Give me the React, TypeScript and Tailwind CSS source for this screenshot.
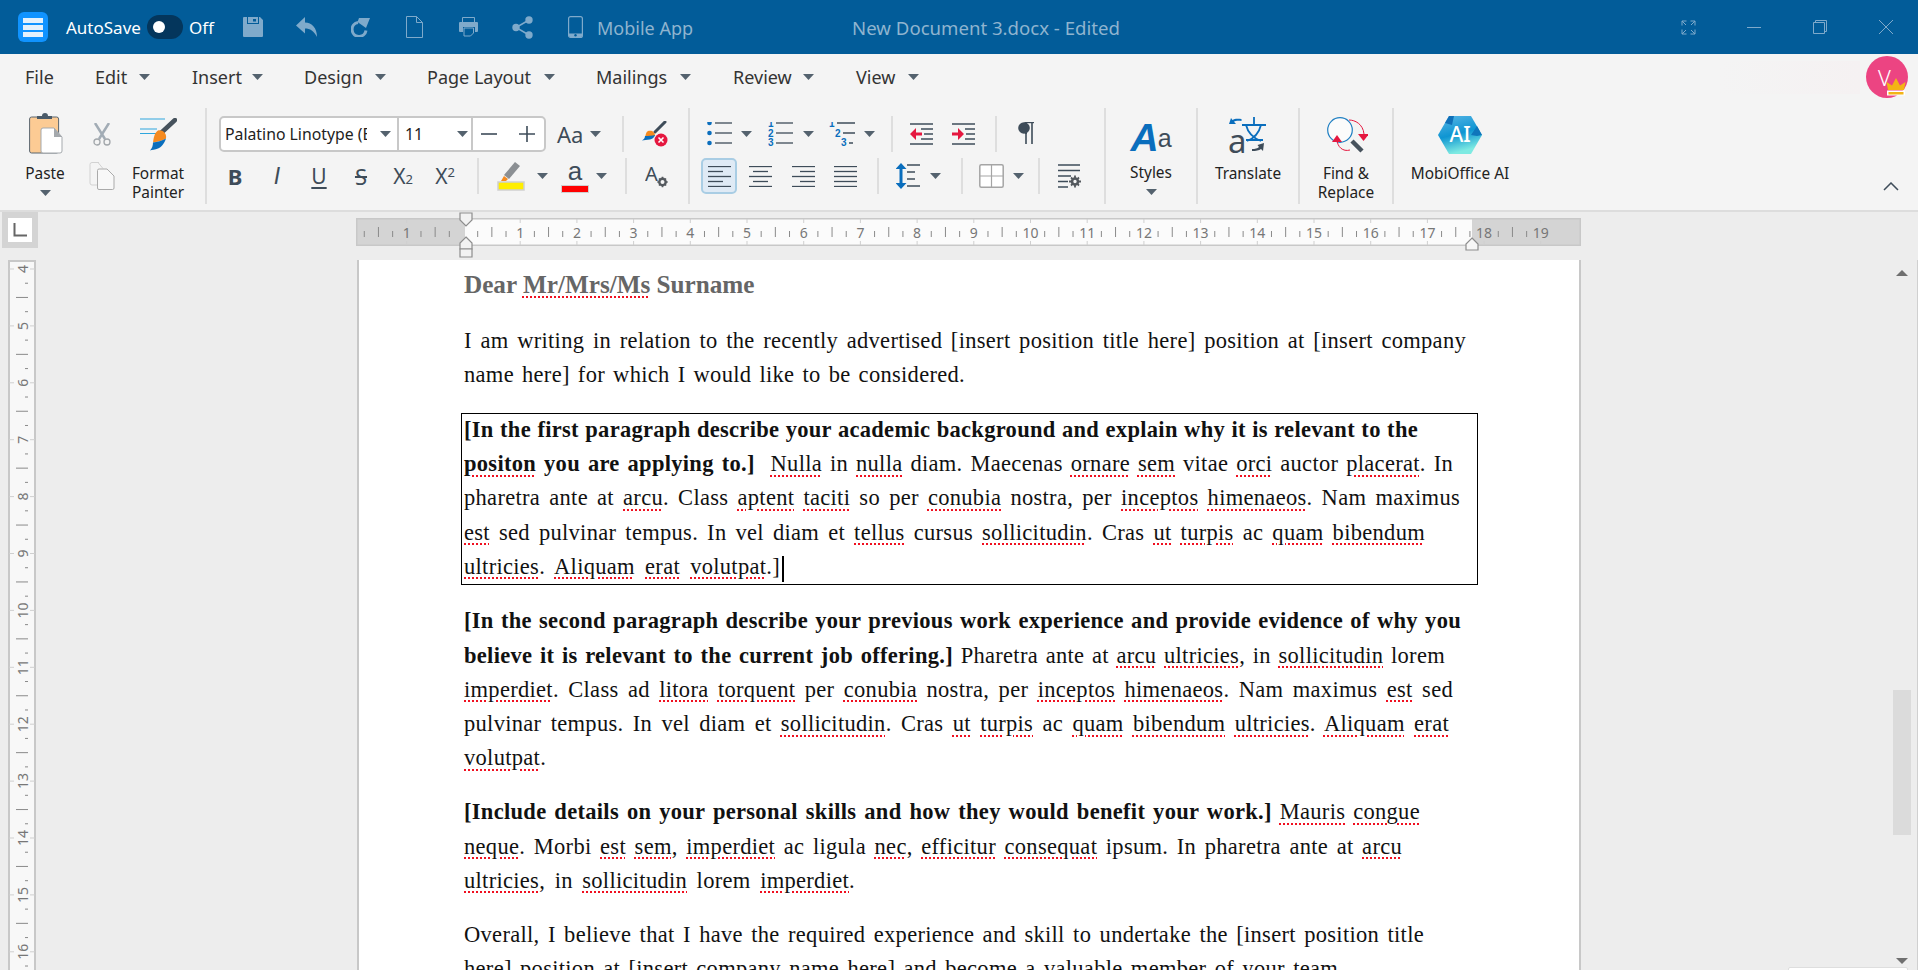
import React from "react";

const SLATE = "#3e4c59";
const BLUE = "#0a6ebd";
const MUTE = "#7faacb";

function Caret({ className = "" }: { className?: string }) {
  return (
    <svg width="11" height="6" viewBox="0 0 11 6" className={"shrink-0 " + className}>
      <path d="M0 0h11L5.5 6z" fill="#54626e" />
    </svg>
  );
}

function Sep({ className = "" }: { className?: string }) {
  return <div className={"w-[2px] h-[36px] bg-[#dedede] shrink-0 " + className} />;
}

function BigSep() {
  return <div className="w-[2px] h-[96px] mt-[8px] bg-[#dedede] shrink-0" />;
}

function TitleBar() {
  return (
    <div className="h-[54px] shrink-0 bg-[#025c99] flex items-center text-[17px] leading-[20px] whitespace-nowrap">
      <div className="ml-[18px] w-[30px] h-[30px] rounded-[6px] bg-[#1093ff] flex flex-col items-center justify-center gap-[2px]">
        <div className="w-[20px] h-[5px] bg-[#e4f1fc]" />
        <div className="w-[20px] h-[5px] bg-[#e4f1fc]" />
        <div className="w-[20px] h-[5px] bg-[#e4f1fc]" />
      </div>
      <div className="ml-[18px] w-[81px] text-white pt-[1px]">AutoSave</div>
      <div className="w-[36px] h-[24px] rounded-full bg-[#04365c] flex items-center pl-[6px]">
        <div className="w-[12px] h-[12px] rounded-full bg-white" />
      </div>
      <div className="ml-[6px] w-[28px] text-white pt-[1px]">Off</div>
      <svg width="20" height="20" viewBox="0 0 20 20" className="ml-[26px] shrink-0">
        <path d="M0 1a1 1 0 011-1h3v7h12V0h1l3 3v16a1 1 0 01-1 1H1a1 1 0 01-1-1z" fill={MUTE} />
        <path d="M5 0h10v6H5z" fill={MUTE} />
        <path d="M10 2h3v2.500h-3z" fill="#025c99" />
        <path d="M4 6.500h12" stroke="#025c99" strokeWidth="1" />
      </svg>
      <svg width="21" height="20" viewBox="0 0 21 20" className="ml-[33px] shrink-0">
        <path d="M9 0L0 8.500 9 16.500V11.500C14 11.500 18 14 21 20 21 11 16 5.500 9 5.500z" fill={MUTE} />
      </svg>
      <svg width="19" height="20" viewBox="0 0 19 20" className="ml-[34px] shrink-0">
        <path d="M7 5.500A7 7 0 1 0 15 13.500" fill="none" stroke={MUTE} strokeWidth="3" />
        <path d="M8 1H19L15 11 6.500 5z" fill={MUTE} />
      </svg>
      <svg width="17" height="22" viewBox="0 0 17 22" className="ml-[36px] shrink-0">
        <path d="M.5.5h10l6 6v15H.5zM10.500.5v6h6" fill="none" stroke={MUTE} />
      </svg>
      <svg width="19" height="20" viewBox="0 0 19 20" className="ml-[36px] shrink-0">
        <path d="M3.500.5h12v5h-12z" fill="none" stroke={MUTE} />
        <path d="M1 5h17a1 1 0 011 1v8a1 1 0 01-1 1h-2V10H4v5H1a1 1 0 01-1-1V6a1 1 0 011-1z" fill={MUTE} />
        <path d="M5 11h9.500v5l-3 3H5z" fill="none" stroke={MUTE} />
      </svg>
      <svg width="21" height="23" viewBox="0 0 21 23" className="ml-[34px] shrink-0">
        <g fill={MUTE}>
          <circle cx="17" cy="4" r="3.700" />
          <circle cx="4" cy="11.500" r="3.700" />
          <circle cx="17" cy="19" r="3.700" />
        </g>
        <path d="M17 4L4 11.500 17 19" fill="none" stroke={MUTE} strokeWidth="1.500" />
      </svg>
      <svg width="15" height="22" viewBox="0 0 15 22" className="ml-[35px] shrink-0">
        <rect x=".6" y=".6" width="13.800" height="20.800" rx="2" fill="none" stroke={MUTE} strokeWidth="1.200" />
        <path d="M1 17.500h13v2a2 2 0 01-2 2H3a2 2 0 01-2-2z" fill={MUTE} />
        <circle cx="7.500" cy="19.300" r="1.200" fill="#025c99" />
      </svg>
      <div className="ml-[14px] w-[255px] text-[#8fb4cf] text-[18px] pt-[1px]">Mobile App</div>
      <div className="w-[268px] text-center text-[#8fb4cf] text-[18.600px] pt-[1px]">New Document 3.docx - Edited</div>
      <svg width="15" height="15" viewBox="0 0 15 15" className="ml-[561px] shrink-0">
        <path d="M5.500 1H1v4.500M1 1l4 4M9.500 1H14v4.500M14 1l-4 4M5.500 14H1V9.500M1 14l4-4M9.500 14H14V9.500M14 14l-4-4" fill="none" stroke={MUTE} />
      </svg>
      <svg width="14" height="14" viewBox="0 0 14 14" className="ml-[51px] shrink-0">
        <path d="M0 7.500h14" stroke={MUTE} />
      </svg>
      <svg width="14" height="14" viewBox="0 0 14 14" className="ml-[52px] shrink-0">
        <path d="M2.500 2.500V.5h11v11h-2M.5 2.500h11v11H.5z" fill="none" stroke={MUTE} />
      </svg>
      <svg width="14" height="14" viewBox="0 0 14 14" className="ml-[52px] shrink-0">
        <path d="M0 0l14 14M14 0L0 14" stroke={MUTE} />
      </svg>
    </div>
  );
}

function MenuBar() {
  return (
    <div className="h-[46px] flex items-center text-[18px] text-[#333] whitespace-nowrap">
      <div className="ml-[25px] w-[28px]">File</div>
      <div className="ml-[42px] w-[32px]">Edit</div>
      <Caret className="ml-[12px]" />
      <div className="ml-[42px] w-[49px]">Insert</div>
      <Caret className="ml-[11px]" />
      <div className="ml-[41px] w-[59px]">Design</div>
      <Caret className="ml-[12px]" />
      <div className="ml-[41px] w-[105px]">Page Layout</div>
      <Caret className="ml-[12px]" />
      <div className="ml-[41px] w-[72px]">Mailings</div>
      <Caret className="ml-[12px]" />
      <div className="ml-[42px] w-[59px]">Review</div>
      <Caret className="ml-[11px]" />
      <div className="ml-[42px] w-[41px]">View</div>
      <Caret className="ml-[11px]" />
      <div className="ml-auto w-[140px] h-[33px] bg-linear-to-r from-[#f4f4f4] to-[#f5f1f2]" />
      <div className="ml-[6px] mr-[10px] relative w-[42px] h-[42px] rounded-full bg-[#ec4482] text-white text-[22px] leading-[42px] pl-[12px] font-light">
        V
        <svg width="22" height="19" viewBox="0 0 22 19" className="absolute left-[19px] top-[21px]">
          <path d="M2 16h18" stroke="#fff" strokeWidth="5" />
          <path d="M3 13L1.500 5 7 8.500 11 1l4 7.500L20.500 5 19 13zM3.500 15h15v2.500h-15z" fill="#f3b415" />
        </svg>
      </div>
    </div>
  );
}

function PasteIcon() {
  return (
    <svg width="34" height="42" viewBox="0 0 34 42">
      <rect x=".6" y="4" width="29" height="36" rx="2" fill="#fccb94" stroke="#59656f" />
      <path d="M8 5V3h5a3 3 0 016 0h4v3H8z" fill="#4a5a68" />
      <path d="M14 15h11l8 9v14a2 2 0 01-2 2H14a2 2 0 01-2-2V17a2 2 0 012-2z" fill="#fff" stroke="#a5a9ad" />
      <path d="M25 15l8 9h-8z" fill="#a5a9ad" />
    </svg>
  );
}

function ClipboardSection() {
  return (
    <div className="w-[205px] shrink-0 flex text-[#222]">
      <div className="w-[90px] flex flex-col items-center pt-[13px]">
        <div className="h-[42px] ml-[2px]"><PasteIcon /></div>
        <div className="mt-[9px]">Paste</div>
        <Caret className="mt-[7px]" />
      </div>
      <div className="w-[24px] flex flex-col items-center pt-[23px]">
        <svg width="18" height="23" viewBox="0 0 18 23">
          <path d="M2 0l10 16M16 0L6 16" stroke="#a2acb5" strokeWidth="2.500" />
          <circle cx="4" cy="19" r="3" fill="none" stroke="#a2a7ab" strokeWidth="1.300" />
          <circle cx="14" cy="19" r="3" fill="none" stroke="#a2a7ab" strokeWidth="1.300" />
        </svg>
        <svg width="26" height="28" viewBox="0 0 26 28" className="mt-[16px] shrink-0">
          <path d="M10 .5H3a2 2 0 00-2 2V21a2 2 0 002 2h5" fill="none" stroke="#d2d2d2" />
          <path d="M3 .5h6l5 6" fill="none" stroke="#d2d2d2" />
          <path d="M10 7h8l7 7v12a1.500 1.500 0 01-1.500 1.500H10A1.500 1.500 0 018.500 26V8.500A1.500 1.500 0 0110 7z" fill="#f8f8f8" stroke="#aaa" />
        </svg>
      </div>
      <div className="w-[88px] flex flex-col items-center pt-[18px]">
        <svg width="38" height="35" viewBox="0 0 38 35" className="shrink-0">
          <path d="M1 1h25M1 11h17M1 15.500h17" stroke="#2ea6dd" strokeWidth="1.200" />
          <path d="M36 2L22 15" stroke="#46525c" strokeWidth="4.500" strokeLinecap="round" />
          <path d="M19 12.500c4-1 9 2.500 8 8-2 1.500-7 3-13 4 .5-4 1.500-10 5-12z" fill="#f58a1f" />
          <path d="M14 24.500c4-.5 9-1.800 13-4-1.500 5-5 9-8 10-3 1-6 1.500-8 2 2-2 3-5 3-8z" fill="#0a6ebd" />
        </svg>
        <div className="mt-[11px] leading-[19px] text-center">Format<br />Painter</div>
      </div>
    </div>
  );
}

function FontSection() {
  const cell = "w-[42px] h-[36px] flex items-center justify-center shrink-0";
  return (
    <div className="w-[481px] shrink-0 pt-[16px]">
      <div className="h-[36px] flex items-center">
        <div className="ml-[12px] w-[327px] h-[36px] rounded-[5px] border-2 border-[#c8c8c8] bg-white flex items-center text-[#222] text-[15.800px] shrink-0">
          <div className="w-[176px] flex items-center pl-[4px]">
            <div className="w-[142px] overflow-hidden whitespace-nowrap">Palatino Linotype (Body)</div>
            <Caret className="ml-[13px]" />
          </div>
          <div className="w-[2px] h-full bg-[#c8c8c8]" />
          <div className="w-[72px] flex items-center pl-[6px]">
            <div className="w-[52px]">11</div>
            <Caret />
          </div>
          <div className="w-[2px] h-full bg-[#c8c8c8]" />
          <svg width="16" height="16" viewBox="0 0 16 16" className="ml-[8px] shrink-0">
            <path d="M0 8h16" stroke={SLATE} strokeWidth="1.600" />
          </svg>
          <svg width="16" height="16" viewBox="0 0 16 16" className="ml-[22px] shrink-0">
            <path d="M0 8h16M8 0v16" stroke={SLATE} strokeWidth="1.600" />
          </svg>
        </div>
        <div className="ml-[11px] w-[28px] text-[22px] leading-[36px] text-[#3e4c59]">Aa</div>
        <Caret className="ml-[5px]" />
        <Sep className="ml-[21px]" />
        <svg width="28" height="26" viewBox="0 0 28 26" className="ml-[17px] shrink-0">
          <path d="M24 1L14 11" stroke={SLATE} strokeWidth="3" strokeLinecap="round" />
          <path d="M7 10c4-1 7 1 7 5-3 1-7 2-10 2 .5-3 1-6 3-7z" fill="#f58a1f" />
          <path d="M4 15c3 0 7-.2 10-1-1 3-3 4-5 4.500-3 .5-6 .7-8 1 2-1 3-3 3-4.500z" fill="#0a6ebd" />
          <circle cx="20" cy="19" r="6.500" fill="#e5173f" />
          <path d="M17.500 16.500l5 5M22.500 16.500l-5 5" stroke="#fff" strokeWidth="1.600" />
        </svg>
      </div>
      <div className="mt-[6px] h-[36px] flex items-center text-[#3e4c59]">
        <div className={cell + " ml-[7px] text-[22px] font-bold"}>B</div>
        <div className={cell + " font-['Liberation_Sans',sans-serif] italic text-[23px]"}>I</div>
        <div className={cell + " text-[21px] underline underline-offset-[3px]"}>U</div>
        <div className={cell + " text-[22px] line-through"}>S</div>
        <div className={cell + " text-[21px]"}>X<span className="text-[13px] mt-[7px]">2</span></div>
        <div className={cell + " text-[21px]"}>X<span className="text-[13px] -mt-[7px]">2</span></div>
        <Sep className="ml-[11px]" />
        <svg width="28" height="30" viewBox="0 0 28 30" className="ml-[18px] shrink-0">
          <path d="M18 1l5 4-11 13-5-4z" fill="#8b8f93" />
          <path d="M7 15l4 3-2 2H4z" fill="#f58a1f" />
          <rect x="1" y="21" width="26" height="8" fill="#ffee00" stroke="#cfcfcf" strokeWidth="1.500" />
        </svg>
        <Caret className="ml-[12px]" />
        <div className="ml-[13px] w-[28px] h-[36px] flex flex-col items-center">
          <div className="text-[26px] leading-[26px] h-[27px] font-['Liberation_Sans',sans-serif]">a</div>
          <div className="w-[28px] h-[8px] bg-[#ff0000] border-[1.5px] border-[#cfcfcf]" />
        </div>
        <Caret className="ml-[7px]" />
        <Sep className="ml-[18px]" />
        <svg width="23" height="24" viewBox="0 0 23 24" className="ml-[18px] shrink-0">
          <text x="0" y="17" fontSize="20" fill={SLATE} fontFamily="Noto Sans">A</text>
          <circle cx="17.500" cy="18" r="3.200" fill="none" stroke="#54595e" strokeWidth="2.400" />
          <path d="M17.500 12.800v2M17.500 21v2.200M12.300 18h2M20.500 18h2.200M14 14.500l1.400 1.400M19.600 20l1.500 1.500M21 14.500L19.600 16M15.400 20L14 21.500" stroke="#54595e" strokeWidth="1.600" />
        </svg>
      </div>
    </div>
  );
}

function Lines({ kind }: { kind: "l" | "c" | "r" | "j" }) {
  const rows: [number, number][] =
    kind === "l" ? [[0, 23], [0, 15], [0, 23], [0, 15], [0, 23]]
    : kind === "c" ? [[0, 23], [4, 19], [0, 23], [4, 19], [0, 23]]
    : kind === "r" ? [[0, 23], [8, 23], [0, 23], [8, 23], [0, 23]]
    : [[0, 23], [0, 23], [0, 23], [0, 23], [0, 23]];
  return (
    <svg width="23" height="21" viewBox="0 0 23 21" className="shrink-0">
      {rows.map((r, i) => (
        <path key={i} d={`M${r[0]} ${0.5 + i * 5}H${r[1]}`} stroke={SLATE} strokeWidth="1.300" />
      ))}
    </svg>
  );
}

function ListIcon({ kind }: { kind: "b" | "n" | "m" }) {
  return (
    <svg width="26" height="24" viewBox="0 0 26 24" className="shrink-0">
      {kind === "b" && (
        <g>
          {[1, 11, 21].map((y) => <circle key={y} cx="2.500" cy={y} r="2.300" fill={BLUE} />)}
          {[1, 11, 21].map((y) => <path key={y} d={`M8 ${y}H25`} stroke={SLATE} strokeWidth="1.300" />)}
        </g>
      )}
      {kind === "n" && (
        <g fontSize="10" fontWeight="700" fill={BLUE} fontFamily="Liberation Sans">
          <text x="0" y="5">1</text><text x="0" y="15">2</text><text x="0" y="24">3</text>
          {[1, 11, 21].map((y) => <path key={y} d={`M8 ${y}H25`} stroke={SLATE} strokeWidth="1.300" />)}
        </g>
      )}
      {kind === "m" && (
        <g fontSize="10" fontWeight="700" fill={BLUE} fontFamily="Liberation Sans">
          <text x="0" y="5">1</text><text x="6" y="15">2</text><text x="12" y="24">3</text>
          <path d="M8 1H26M14 11H26M20 21H24" stroke={SLATE} strokeWidth="1.300" />
        </g>
      )}
    </svg>
  );
}

function ParagraphSection() {
  return (
    <div className="w-[414px] shrink-0 pt-[16px]">
      <div className="h-[36px] flex items-center">
        <div className="ml-[17px]"><ListIcon kind="b" /></div>
        <Caret className="ml-[8px]" />
        <div className="ml-[16px]"><ListIcon kind="n" /></div>
        <Caret className="ml-[9px]" />
        <div className="ml-[15px]"><ListIcon kind="m" /></div>
        <Caret className="ml-[9px]" />
        <Sep className="ml-[16px]" />
        <svg width="23" height="22" viewBox="0 0 23 22" className="ml-[17px] shrink-0">
          <path d="M0 1h23M0 21h23M11 6h12M14 11h9M11 16h12" stroke={SLATE} strokeWidth="1.300" />
          <path d="M0 11l6-6v4.500h6v3H6V17z" fill="#e5173f" />
        </svg>
        <svg width="23" height="22" viewBox="0 0 23 22" className="ml-[19px] shrink-0">
          <path d="M0 1h23M0 21h23M13 6h10M14 11h9M13 16h10" stroke={SLATE} strokeWidth="1.300" />
          <path d="M12 11L6 5v4.500H0v3h6V17z" fill="#e5173f" />
        </svg>
        <Sep className="ml-[20px]" />
        <svg width="16" height="24" viewBox="0 0 16 24" className="ml-[21px] shrink-0">
          <path d="M6.500 0.500H16" stroke={SLATE} strokeWidth="1.400" />
          <circle cx="6" cy="6" r="5.800" fill={SLATE} />
          <path d="M7 0h2v12H7z" fill={SLATE} />
          <path d="M8 1V22M14 1V22" stroke={SLATE} strokeWidth="1.600" />
        </svg>
      </div>
      <div className="mt-[6px] h-[36px] flex items-center">
        <div className="ml-[11px] w-[36px] h-[36px] rounded-[5px] border-2 border-[#a9cde4] bg-[#dfeaf5] flex items-center justify-center shrink-0">
          <Lines kind="l" />
        </div>
        <div className="ml-[12px]"><Lines kind="c" /></div>
        <div className="ml-[20px]"><Lines kind="r" /></div>
        <div className="ml-[19px]"><Lines kind="j" /></div>
        <Sep className="ml-[20px]" />
        <svg width="24" height="26" viewBox="0 0 24 26" className="ml-[17px] shrink-0">
          <path d="M5 0l5.500 6h-4v14h4L5 26l-5.500-6h4V6h-4z" fill={BLUE} />
          <path d="M11 2h13M11 9h8M11 16h8M11 23h13" stroke={SLATE} strokeWidth="1.300" />
        </svg>
        <Caret className="ml-[10px]" />
        <Sep className="ml-[20px]" />
        <svg width="25" height="24" viewBox="0 0 25 24" className="ml-[16px] shrink-0">
          <rect x=".8" y=".8" width="23.400" height="22.400" rx="1.500" fill="#fff" stroke="#a5a5a5" strokeWidth="1.500" />
          <path d="M12.500 1v22M1 12h23" stroke="#a5a5a5" strokeWidth="1.200" />
        </svg>
        <Caret className="ml-[9px]" />
        <Sep className="ml-[14px]" />
        <svg width="24" height="24" viewBox="0 0 24 24" className="ml-[17px] shrink-0">
          <path d="M1 1h22M1 6.500h22M1 12h13M1 17.500h10M1 23h10" stroke={SLATE} strokeWidth="1.300" />
          <circle cx="18" cy="17.500" r="3" fill="none" stroke="#54595e" strokeWidth="2.600" />
          <path d="M18 11.500v2.500M18 21v2.500M12 17.500h2.500M21.500 17.500H24M14 13.500l1.700 1.700M20.300 19.800l1.700 1.700M22 13.500l-1.700 1.700M15.700 19.800L14 21.500" stroke="#54595e" strokeWidth="1.800" />
        </svg>
      </div>
    </div>
  );
}

function StylesSection() {
  return (
    <div className="w-[90px] shrink-0 flex flex-col items-center text-[#222]">
      <div className="h-[40px] mt-[16px] flex items-end font-['Liberation_Sans',sans-serif] leading-[36px]">
        <span className="text-[39px] font-bold italic text-[#0a6ebd]">A</span>
        <span className="text-[25px] text-[#3e4c59] -ml-[1px]">a</span>
      </div>
      <div className="mt-[7px]">Styles</div>
      <Caret className="mt-[7px]" />
    </div>
  );
}

function TranslateSection() {
  return (
    <div className="w-[100px] shrink-0 flex flex-col items-center text-[#222]">
      <svg width="38" height="38" viewBox="0 0 38 38" className="mt-[16px] shrink-0">
        <text x="-1" y="37" fontSize="33" fill={SLATE} fontFamily="Noto Sans">a</text>
        <path d="M13 9h24M25 1v8M17 9c2 8 7 13 15 16M32 9c-2 8-6 13-14 16M17 24h17" fill="none" stroke={BLUE} strokeWidth="1.800" />
        <path d="M0 8l2-6 1.500 2c2-1.500 5-1.500 9-1v2c-3-.3-6-.3-7.500.7L7 8z" fill={BLUE} />
        <path d="M35 27l-1 8-2-2c-2 1.500-5 2-9 2v-2c3 0 5.500-.5 7-2l-1.500-2z" fill={SLATE} />
      </svg>
      <div className="mt-[10px]">Translate</div>
    </div>
  );
}

function FindSection() {
  return (
    <div className="w-[92px] shrink-0 flex flex-col items-center text-[#222]">
      <svg width="44" height="40" viewBox="0 0 44 40" className="mt-[15px] shrink-0">
        <circle cx="16" cy="15" r="12.300" fill="#fbfbfb" stroke="#1f7fc2" strokeWidth="1.200" />
        <path d="M28 26l10 10" stroke="#46525c" strokeWidth="4.500" />
        <path d="M25 5c6 0 14 4 15 14" fill="none" stroke="#e5173f" />
        <path d="M34 19h11l-5.500 7z" fill="#e5173f" />
        <path d="M26 35c-7 2-13-3-13-11" fill="none" stroke="#e5173f" />
        <path d="M8 27l5-7 5 7z" fill="#e5173f" />
      </svg>
      <div className="mt-[9px] leading-[19px] text-center">Find &amp;<br />Replace</div>
    </div>
  );
}

function AiSection() {
  return (
    <div className="w-[132px] shrink-0 flex flex-col items-center text-[#222] whitespace-nowrap">
      <svg width="46" height="40" viewBox="0 0 46 40" className="mt-[15px] shrink-0">
        <defs>
          <linearGradient id="aig" x1="0" y1="0" x2="0.3" y2="1">
            <stop offset="0" stopColor="#5ab6e6" />
            <stop offset="0.55" stopColor="#0e95d2" />
            <stop offset="1" stopColor="#7eeae2" />
          </linearGradient>
        </defs>
        <path d="M1 20L12 1h22l11 19-11 19H12z" fill="url(#aig)" />
        <path d="M12 1h5l-2 9-7-2z" fill="#0f6fb8" />
        <path d="M45 20l-5-9-6 9 6 1z" fill="#0f75bb" />
        <text x="23" y="27" textAnchor="middle" fontSize="21" fill="#fff" fontFamily="Noto Sans" fontWeight="500">AI</text>
      </svg>
      <div className="mt-[9px]">MobiOffice AI</div>
    </div>
  );
}

function Ribbon() {
  return (
    <div className="h-[110px] flex text-[15.400px] leading-[19px]">
      <ClipboardSection />
      <BigSep />
      <FontSection />
      <BigSep />
      <ParagraphSection />
      <BigSep />
      <StylesSection />
      <BigSep />
      <TranslateSection />
      <BigSep />
      <FindSection />
      <BigSep />
      <AiSection />
      <svg width="16" height="9" viewBox="0 0 16 9" className="ml-[357px] mt-[82px] shrink-0">
        <path d="M1 8l7-7 7 7" fill="none" stroke={SLATE} strokeWidth="1.500" />
      </svg>
    </div>
  );
}

function HRuler() {
  const U = 56.7;
  const X0 = 463.5 - 356;
  const ns = Array.from({ length: 24 }, (_, i) => i - 2);
  return (
    <div className="relative ml-[318px] mt-[6px] w-[1225px] h-[28px] shrink-0">
      <svg width="1225" height="28" viewBox="0 0 1225 28" className="block">
        <rect x="0" y="0" width="1225" height="28" fill="#d4d4d4" />
        <rect x="109" y="0" width="1007" height="28" fill="#fbfbfb" />
        <rect x=".5" y=".5" width="1224" height="27" fill="none" stroke="#c8c8c8" strokeWidth="2" />
        {ns.map((n) => {
          const x = X0 + U * n;
          const label = n === 0 ? "" : n < 0 ? (n === -1 ? "1" : "") : String(n);
          return (
            <g key={n}>
              {n > -2 && n < 21 && (
                <path d={`M${x} 1V5M${x} 23V27`} stroke="#cfcfcf" />
              )}
              {label && (
                <text x={x} y="19.500" textAnchor="middle" fontSize="14" fill="#777" fontFamily="Noto Sans">{label}</text>
              )}
              {n < 20 && x + U * 0.75 < 1222 && (
                <path d={`M${x + U * 0.25} 13V19M${x + U * 0.5} 9V19M${x + U * 0.75} 13V19`} stroke="#8a8a8a" />
              )}
            </g>
          );
        })}
      </svg>
      <svg width="14" height="46" viewBox="0 0 14 46" className="absolute left-[103px] -top-[6px]">
        <path d="M1 1h12v7l-6 6-6-6z" fill="#f2f2f2" stroke="#8d8d8d" strokeWidth="1.200" />
        <path d="M7 25l6 6v6H1v-6z" fill="#f2f2f2" stroke="#8d8d8d" strokeWidth="1.200" />
        <path d="M1 37h12v8H1z" fill="#f2f2f2" stroke="#8d8d8d" strokeWidth="1.200" />
      </svg>
      <svg width="14" height="14" viewBox="0 0 14 14" className="absolute left-[1109px] top-[19px]">
        <path d="M7 1l6 6v6H1V7z" fill="#f7f7f7" stroke="#8d8d8d" strokeWidth="1.200" />
      </svg>
    </div>
  );
}

function VRuler() {
  const U = 56.9;
  const ns = Array.from({ length: 14 }, (_, i) => i + 4);
  return (
    <svg width="28" height="710" viewBox="0 0 28 710" className="ml-[8px] shrink-0 block">
      <rect x="1" y="1" width="26" height="720" fill="#f8f8f8" stroke="#c8c8c8" strokeWidth="2" />
      {ns.map((n) => {
        const y = 9 + U * (n - 4);
        return (
          <g key={n}>
            <path d={`M1 ${y}H6M22 ${y}H27`} stroke="#cfcfcf" />
            <text x="14.500" y={y} transform={`rotate(-90 14.500 ${y})`} textAnchor="middle" dominantBaseline="central" fontSize="14" fill="#777" fontFamily="Noto Sans">{n}</text>
            <path d={`M17 ${y + U * 0.25}H20M8 ${y + U * 0.5}H20M17 ${y + U * 0.75}H20`} stroke="#8a8a8a" />
          </g>
        );
      })}
    </svg>
  );
}

function Runs({ text }: { text: string }) {
  const parts = text.split(/(_[^_]+_)/);
  return (
    <>
      {parts.map((p, i) =>
        p.startsWith("_") ? (
          <span key={i} className="underline decoration-dotted decoration-2 underline-offset-[4px] decoration-[#f01020]">{p.slice(1, -1)}</span>
        ) : (
          <span key={i}>{p}</span>
        )
      )}
    </>
  );
}

function Line({ w, b, t, caret }: { w: string; b?: string; t?: string; caret?: boolean }) {
  return (
    <div className={"h-[34.2px] leading-[34.2px] whitespace-pre [text-align-last:justify] " + w}>
      {b && <span className="font-bold"><Runs text={b} /></span>}
      {t && <Runs text={t} />}
      {caret && <span className="inline-block w-[2px] h-[26px] bg-black align-middle ml-[2px]" />}
    </div>
  );
}

function Page() {
  return (
    <div className="ml-[321px] w-[1224px] h-[720px] shrink-0 border-x-2 border-[#c8c8c8] bg-white pl-[105px] pt-[7.500px] font-['Liberation_Serif',serif] text-[22.5px] tracking-[0.3px] text-[#111]">
      <div className="h-[34px] leading-[34px] text-[25.200px] tracking-normal font-bold text-[#666] whitespace-nowrap">
        Dear <Runs text="_Mr/Mrs/Ms_ Surname" />
      </div>
      <div className="mt-[22px]">
        <Line w="w-[1002px]" t="I am writing in relation to the recently advertised [insert position title here] position at [insert company" />
        <Line w="w-[501px]" t="name here] for which I would like to be considered." />
      </div>
      <div className="mt-[21.100px] -ml-[3px] pl-[2px] w-[1017px] h-[172px] border border-black">
        <div className="-mt-[1px]">
          <Line w="w-[954px]" b="[In the first paragraph describe your academic background and explain why it is relevant to the" />
          <Line w="w-[989px]" b="_positon_ you are applying to.]" t="  _Nulla_ in _nulla_ diam. Maecenas _ornare_ _sem_ vitae _orci_ auctor _placerat_. In" />
          <Line w="w-[996px]" t="pharetra ante at _arcu_. Class _aptent_ _taciti_ so per _conubia_ nostra, per _inceptos_ _himenaeos_. Nam maximus" />
          <Line w="w-[961px]" t="_est_ sed pulvinar tempus. In vel diam et _tellus_ cursus _sollicitudin_. Cras _ut_ _turpis_ ac _quam_ _bibendum_" />
          <Line w="w-[320px]" t="_ultricies_. _Aliquam_ _erat_ _volutpat_.]" caret />
        </div>
      </div>
      <div className="mt-[19.500px]">
        <Line w="w-[997px]" b="[In the second paragraph describe your previous work experience and provide evidence of why you" />
        <Line w="w-[981px]" b="believe it is relevant to the current job offering.]" t=" Pharetra ante at _arcu_ _ultricies_, in _sollicitudin_ lorem" />
        <Line w="w-[989px]" t="_imperdiet_. Class ad _litora_ _torquent_ per _conubia_ nostra, per _inceptos_ _himenaeos_. Nam maximus _est_ sed" />
        <Line w="w-[985px]" t="pulvinar tempus. In vel diam et _sollicitudin_. Cras _ut_ _turpis_ ac _quam_ _bibendum_ _ultricies_. _Aliquam_ _erat_" />
        <Line w="w-[88px]" t="_volutpat_." />
      </div>
      <div className="mt-[20px]">
        <Line w="w-[956px]" b="[Include details on your personal skills and how they would benefit your work.]" t=" _Mauris_ _congue_" />
        <Line w="w-[938px]" t="_neque_. Morbi _est_ _sem_, _imperdiet_ ac ligula _nec_, _efficitur_ _consequat_ ipsum. In pharetra ante at _arcu_" />
        <Line w="w-[391px]" t="_ultricies_, in _sollicitudin_ lorem _imperdiet_." />
      </div>
      <div className="mt-[20px]">
        <Line w="w-[960px]" t="Overall, I believe that I have the required experience and skill to undertake the [insert position title" />
        <Line w="w-[880px]" t="here] position at [insert company name here] and become a valuable member of your team." />
      </div>
    </div>
  );
}

function Scrollbar() {
  return (
    <div className="ml-auto mr-[6px] w-[18px] flex flex-col items-center shrink-0">
      <svg width="12" height="6" viewBox="0 0 12 6" className="mt-[10px] shrink-0"><path d="M6 0l6 6H0z" fill="#6f6f6f" /></svg>
      <div className="mt-[414px] w-[18px] h-[145px] bg-[#dbdbdb] shrink-0" />
      <svg width="12" height="6" viewBox="0 0 12 6" className="mt-[123px] shrink-0"><path d="M0 0h12L6 6z" fill="#6f6f6f" /></svg>
    </div>
  );
}

export default function App() {
  return (
    <div className="relative w-[1918px] h-[970px] overflow-hidden flex flex-col bg-[#ededed] font-['Noto_Sans',sans-serif]">
      <TitleBar />
      <div className="h-[158px] shrink-0 bg-[#f4f4f4] border-b-2 border-[#dddddd]">
        <MenuBar />
        <Ribbon />
      </div>
      <div className="h-[48px] shrink-0 flex items-start">
        <div className="ml-[2px] w-[36px] h-[36px] bg-[#d4d4d4] flex items-center justify-center shrink-0">
          <div className="w-[24px] h-[24px] bg-white flex items-center justify-center">
            <svg width="14" height="14" viewBox="0 0 14 14"><path d="M1.500 0v12.500H14" fill="none" stroke="#666" strokeWidth="2" /></svg>
          </div>
        </div>
        <HRuler />
      </div>
      <div className="flex-1 flex items-start min-h-0 border-r border-[#d0d0d0]">
        <VRuler />
        <Page />
        <Scrollbar />
      </div>
      <div className="absolute left-[1788px] top-[967px] w-[120px] h-[6px] bg-white rounded-t-[2px] border border-[#dedede]" />
    </div>
  );
}
